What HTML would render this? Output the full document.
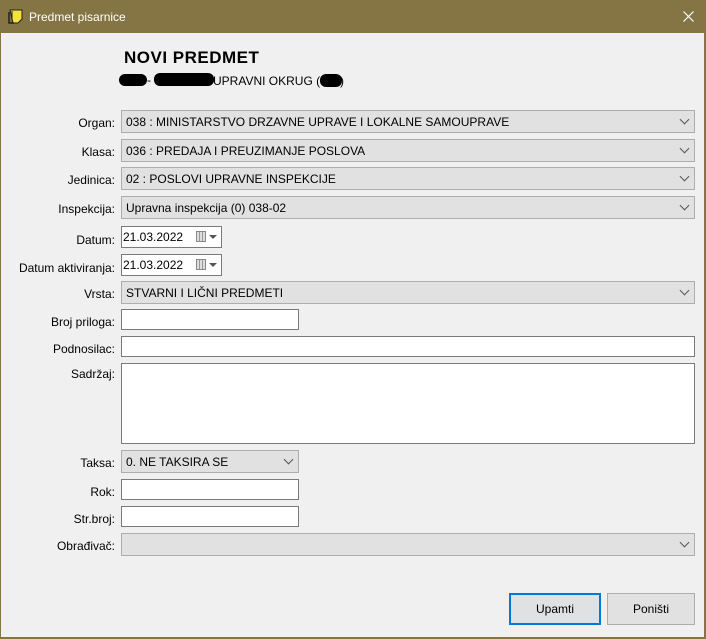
<!DOCTYPE html>
<html><head><meta charset="utf-8"><style>
*{margin:0;padding:0;box-sizing:border-box}
body{width:706px;height:639px;background:#857544;font-family:"Liberation Sans",sans-serif;font-size:12px;color:#000;position:relative;overflow:hidden}
#win{position:absolute;left:1px;top:33px;width:703px;height:604px;background:#f0f0f0}
.t{position:absolute}
.lbl{position:absolute;right:591px;text-align:right;font-size:12px;white-space:nowrap}
.cb{position:absolute;left:121px;width:574px;height:23px;background:#e1e1e1;border:1px solid #adadad;padding:4px 0 0 4px;font-size:12px;white-space:nowrap}
.cb::after{content:"";position:absolute;right:6px;top:5px;width:6px;height:6px;border-right:1px solid #555;border-bottom:1px solid #555;transform:rotate(45deg)}
.tb{position:absolute;left:121px;background:#fff;border:1px solid #7a7a7a}
.dt{position:absolute;left:121px;width:101px;height:22px;background:#fff;border:1px solid #7a7a7a;padding:3px 0 0 1px;font-size:12px}
.cal{position:absolute;left:74px;top:4px;width:10px;height:11px;border:1px solid #888;background:repeating-linear-gradient(90deg,#ddd 0 2px,#999 2px 3px)}
.arr{position:absolute;left:87px;top:8px;border-left:4px solid transparent;border-right:4px solid transparent;border-top:4px solid #555}
.btn{position:absolute;top:593px;height:32px;background:#e1e1e1;border:1px solid #adadad;text-align:center;padding-top:8px;font-size:12px}
</style></head><body>
<svg class="t" style="left:7px;top:8px" width="17" height="17" viewBox="0 0 17 17"><path d="M3 2h12v9l-4 4H6z" fill="#f3e33a" stroke="#222"/><path d="M2 4v11h5" fill="none" stroke="#222" stroke-width="1.5"/><path d="M5 3v9" stroke="#222"/></svg>
<div class="t" style="left:29px;top:10px;color:#fff;font-size:12px">Predmet pisarnice</div>
<svg class="t" style="left:683px;top:11px" width="11" height="11"><path d="M0.5 0.5L10.5 10.5M10.5 0.5L0.5 10.5" stroke="#fff" stroke-width="1.2"/></svg>
<div id="win"></div>
<div class="t" style="left:124px;top:48px;font-size:17px;font-weight:bold;letter-spacing:0.5px">NOVI PREDMET</div>
<div class="t" style="left:119px;top:74px;width:28px;height:12px;background:#000;border-radius:6px"></div>
<div class="t" style="left:147px;top:73px;font-size:12px">-</div>
<div class="t" style="left:154px;top:73px;width:60px;height:13px;background:#000;border-radius:6px"></div>
<div class="t" style="left:213px;top:74px;font-size:12px">UPRAVNI OKRUG (</div>
<div class="t" style="left:320px;top:74px;width:22px;height:13px;background:#000;border-radius:6px"></div>
<div class="t" style="left:340px;top:74px;font-size:12px">)</div>

<div class="lbl" style="top:116px">Organ:</div><div class="cb" style="top:110px">038 : MINISTARSTVO DRZAVNE UPRAVE I LOKALNE SAMOUPRAVE</div>
<div class="lbl" style="top:145px">Klasa:</div><div class="cb" style="top:139px">036 : PREDAJA I PREUZIMANJE POSLOVA</div>
<div class="lbl" style="top:173px">Jedinica:</div><div class="cb" style="top:167px">02 : POSLOVI UPRAVNE INSPEKCIJE</div>
<div class="lbl" style="top:202px">Inspekcija:</div><div class="cb" style="top:196px">Upravna inspekcija (0) 038-02</div>
<div class="lbl" style="top:233px">Datum:</div><div class="dt" style="top:226px">21.03.2022<div class="cal"></div><div class="arr"></div></div>
<div class="lbl" style="top:261px">Datum aktiviranja:</div><div class="dt" style="top:254px">21.03.2022<div class="cal"></div><div class="arr"></div></div>
<div class="lbl" style="top:287px">Vrsta:</div><div class="cb" style="top:281px">STVARNI I LIČNI PREDMETI</div>
<div class="lbl" style="top:315px">Broj priloga:</div><div class="tb" style="top:309px;width:178px;height:21px"></div>
<div class="lbl" style="top:342px">Podnosilac:</div><div class="tb" style="top:336px;width:574px;height:21px"></div>
<div class="lbl" style="top:367px">Sadržaj:</div><div class="tb" style="top:363px;width:574px;height:81px"></div>
<div class="lbl" style="top:456px">Taksa:</div><div class="cb" style="top:450px;width:178px">0. NE TAKSIRA SE</div>
<div class="lbl" style="top:485px">Rok:</div><div class="tb" style="top:479px;width:178px;height:21px"></div>
<div class="lbl" style="top:512px">Str.broj:</div><div class="tb" style="top:506px;width:178px;height:21px"></div>
<div class="lbl" style="top:539px">Obrađivač:</div><div class="cb" style="top:533px"></div>
<div class="btn" style="left:509px;width:92px;border:2px solid #0078d7;padding-top:7px">Upamti</div>
<div class="btn" style="left:607px;width:88px">Poništi</div>
</body></html>
